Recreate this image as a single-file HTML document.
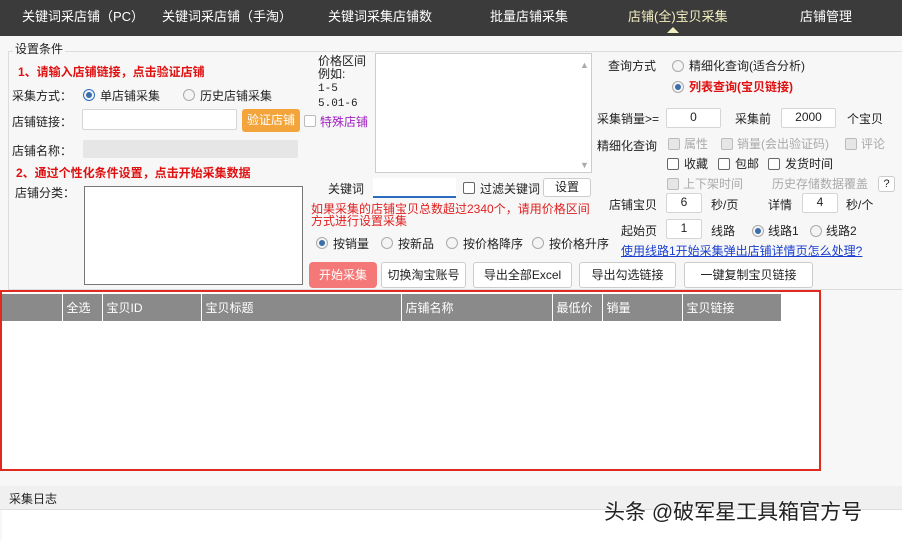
<!DOCTYPE html>
<html><head><meta charset="utf-8"><style>
*{margin:0;padding:0;box-sizing:border-box}
body{width:902px;height:540px;overflow:hidden;background:#f7f7f7;font:12px "Liberation Sans","Noto Sans CJK SC",sans-serif;color:#222;position:relative}
.a{position:absolute;white-space:nowrap;line-height:14px}
.nav{position:absolute;left:0;top:0;width:902px;height:36px;background:#3b3b3b}
.nav span{position:absolute;top:9px;color:#fff;font-size:13px;line-height:15px}
.in{position:absolute;background:#fff;border:1px solid #d5d5d5;border-radius:2px}
.btn{position:absolute;background:#fff;border:1px solid #ccc;border-radius:3px;text-align:center;line-height:22px;height:24px}
.red{color:#e01010;font-weight:bold}
.rb{position:absolute;width:12px;height:12px;border:1px solid #aaa;border-radius:50%;background:#f4f4f4}
.rb.on::after{content:"";position:absolute;left:2px;top:2px;width:6px;height:6px;border-radius:50%;background:#3a6ea8}
.cb{position:absolute;width:12px;height:12px;border:1px solid #666;border-radius:2px;background:#fff}
.cb.dis{border-color:#bbb;background:#e6e6e6}
.g{color:#aaa}
th{background:#8a8a8a;color:#fff;font-weight:normal;text-align:left;padding-left:4px;border-left:1px solid #fff;height:27px}
</style></head><body>
<div class="nav">
<span style="left:22px">关键词采店铺（PC）</span>
<span style="left:162px">关键词采店铺（手淘）</span>
<span style="left:328px">关键词采集店铺数</span>
<span style="left:490px">批量店铺采集</span>
<span style="left:628px;color:#f3eec0">店铺(全)宝贝采集</span>
<span style="left:800px">店铺管理</span>
<div style="position:absolute;left:667px;top:27px;width:0;height:0;border-left:6px solid transparent;border-right:6px solid transparent;border-bottom:6px solid #f3eec0"></div>
</div>
<div style="position:absolute;left:8px;top:51px;width:894px;height:239px;border:1px solid #ddd;border-right:none"></div>
<div class="a" style="left:13px;top:42px;background:#f7f7f7;padding:0 2px">设置条件</div>
<div class="a red" style="left:18px;top:65px">1、请输入店铺链接，点击验证店铺</div>
<div class="a" style="left:12px;top:89px">采集方式：</div>
<div class="rb on" style="left:83px;top:89px;border-color:#2b6cc0"></div><div class="a" style="left:100px;top:89px">单店铺采集</div>
<div class="rb" style="left:183px;top:89px"></div><div class="a" style="left:200px;top:89px">历史店铺采集</div>
<div class="a" style="left:12px;top:115px">店铺链接：</div>
<div class="in" style="left:82px;top:109px;width:155px;height:21px"></div>
<div style="position:absolute;left:242px;top:109px;width:58px;height:23px;background:#f3a43a;border-radius:3px;color:#fff;text-align:center;line-height:23px">验证店铺</div>
<div class="cb" style="left:304px;top:115px;border-color:#bbb"></div>
<div class="a" style="left:320px;top:115px;color:#a020c0">特殊店铺</div>
<div class="a" style="left:12px;top:144px">店铺名称：</div>
<div style="position:absolute;left:83px;top:140px;width:215px;height:18px;background:#e6e6e6;border-radius:2px"></div>
<div class="a red" style="left:16px;top:166px">2、通过个性化条件设置，点击开始采集数据</div>
<div class="a" style="left:15px;top:186px">店铺分类：</div>
<div style="position:absolute;left:84px;top:186px;width:219px;height:99px;background:#fff;border:1px solid #777"></div>
<div class="a" style="left:318px;top:55px;line-height:13px">价格区间<br>例如:<br><span style="font-family:'Liberation Mono',monospace;font-size:11px">1-5<br>5.01-6</span></div>
<div style="position:absolute;left:375px;top:53px;width:217px;height:120px;background:#fff;border:1px solid #ccc"></div>
<div class="a" style="left:580px;top:58px;color:#aaa;font-size:9px">▲</div>
<div class="a" style="left:580px;top:158px;color:#aaa;font-size:9px">▼</div>
<div class="a" style="left:328px;top:182px">关键词</div>
<div style="position:absolute;left:373px;top:178px;width:83px;height:20px;background:#fff;border-bottom:2px solid #2b6cc0"></div>
<div class="cb" style="left:463px;top:182px"></div><div class="a" style="left:480px;top:182px">过滤关键词</div>
<div class="btn" style="left:543px;top:178px;width:48px;height:19px;line-height:17px">设置</div>
<div class="a" style="left:311px;top:203px;color:#e02020;line-height:12px">如果采集的店铺宝贝总数超过2340个，请用价格区间<br>方式进行设置采集</div>
<div class="rb on" style="left:316px;top:237px"></div><div class="a" style="left:333px;top:237px">按销量</div>
<div class="rb" style="left:381px;top:237px"></div><div class="a" style="left:398px;top:237px">按新品</div>
<div class="rb" style="left:446px;top:237px"></div><div class="a" style="left:463px;top:237px">按价格降序</div>
<div class="rb" style="left:532px;top:237px"></div><div class="a" style="left:549px;top:237px">按价格升序</div>
<div style="position:absolute;left:309px;top:262px;width:68px;height:26px;background:#f57878;border-radius:4px;color:#fff;text-align:center;line-height:26px">开始采集</div>
<div class="btn" style="left:381px;top:262px;width:85px;height:26px;line-height:24px">切换淘宝账号</div>
<div class="btn" style="left:473px;top:262px;width:99px;height:26px;line-height:24px">导出全部Excel</div>
<div class="btn" style="left:579px;top:262px;width:97px;height:26px;line-height:24px">导出勾选链接</div>
<div class="btn" style="left:684px;top:262px;width:129px;height:26px;line-height:24px">一键复制宝贝链接</div>
<div class="a" style="left:608px;top:59px">查询方式</div>
<div class="rb" style="left:672px;top:60px"></div><div class="a" style="left:689px;top:59px">精细化查询(适合分析)</div>
<div class="rb on" style="left:672px;top:81px"></div><div class="a red" style="left:689px;top:80px">列表查询(宝贝链接)</div>
<div class="a" style="left:597px;top:112px">采集销量&gt;=</div>
<div class="in" style="left:666px;top:108px;width:55px;height:20px;text-align:center;line-height:16px">0</div>
<div class="a" style="left:735px;top:112px">采集前</div>
<div class="in" style="left:781px;top:108px;width:55px;height:20px;text-align:center;line-height:16px">2000</div>
<div class="a" style="left:847px;top:112px">个宝贝</div>
<div class="a" style="left:597px;top:139px">精细化查询</div>
<div class="cb dis" style="left:668px;top:138px"></div><div class="a g" style="left:684px;top:137px">属性</div>
<div class="cb dis" style="left:721px;top:138px"></div><div class="a g" style="left:737px;top:137px">销量(会出验证码)</div>
<div class="cb dis" style="left:845px;top:138px"></div><div class="a g" style="left:861px;top:137px">评论</div>
<div class="cb" style="left:667px;top:158px"></div><div class="a" style="left:684px;top:157px">收藏</div>
<div class="cb" style="left:718px;top:158px"></div><div class="a" style="left:735px;top:157px">包邮</div>
<div class="cb" style="left:768px;top:158px"></div><div class="a" style="left:785px;top:157px">发货时间</div>
<div class="cb dis" style="left:667px;top:178px"></div><div class="a g" style="left:683px;top:177px">上下架时间</div>
<div class="a g" style="left:772px;top:177px">历史存储数据覆盖</div>
<div class="btn" style="left:878px;top:176px;width:17px;height:16px;line-height:14px;font-size:11px">?</div>
<div class="a" style="left:609px;top:198px">店铺宝贝</div>
<div class="in" style="left:666px;top:193px;width:36px;height:20px;text-align:center;line-height:16px">6</div>
<div class="a" style="left:711px;top:198px">秒/页</div>
<div class="a" style="left:768px;top:198px">详情</div>
<div class="in" style="left:802px;top:193px;width:36px;height:20px;text-align:center;line-height:16px">4</div>
<div class="a" style="left:846px;top:198px">秒/个</div>
<div class="a" style="left:621px;top:224px">起始页</div>
<div class="in" style="left:666px;top:219px;width:36px;height:20px;text-align:center;line-height:16px">1</div>
<div class="a" style="left:711px;top:224px">线路</div>
<div class="rb on" style="left:752px;top:225px"></div><div class="a" style="left:768px;top:224px">线路1</div>
<div class="rb" style="left:810px;top:225px"></div><div class="a" style="left:826px;top:224px">线路2</div>
<div class="a" style="left:621px;top:244px;color:#1a3fd0;text-decoration:underline">使用线路1开始采集弹出店铺详情页怎么处理?</div>
<div style="position:absolute;left:0;top:290px;width:821px;height:181px;border:2px solid #e02a20;background:#fff"></div>
<table style="position:absolute;left:2px;top:294px;border-collapse:collapse;font-size:12px">
<tr><th style="width:60px;border-left:none"></th><th style="width:40px">全选</th><th style="width:99px">宝贝ID</th><th style="width:200px">宝贝标题</th><th style="width:151px">店铺名称</th><th style="width:50px">最低价</th><th style="width:80px">销量</th><th style="width:99px">宝贝链接</th></tr>
</table>
<div style="position:absolute;left:0;top:486px;width:902px;height:24px;background:#f0f0f0;border-bottom:1px solid #ddd"></div>
<div class="a" style="left:9px;top:492px">采集日志</div>
<div style="position:absolute;left:2px;top:510px;width:900px;height:30px;background:#fff"></div>
<div class="a" style="left:604px;top:500px;font-size:21px;line-height:26px;color:#222;text-shadow:0 0 2px #fff">头条 @破军星工具箱官方号</div>
</body></html>
